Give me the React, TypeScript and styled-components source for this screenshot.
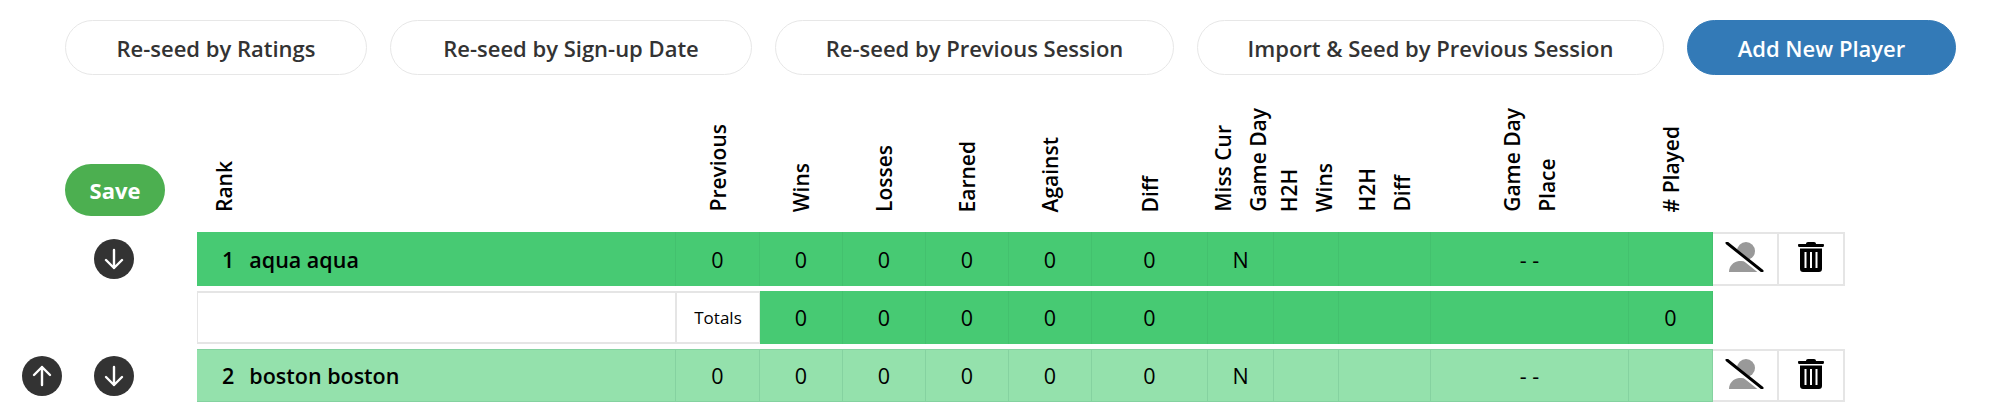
import styled, { createGlobalStyle } from "styled-components";

const COLUMNS = "197px 479px 84px 83px 83px 83px 83px 116px 66px 65px 92px 198px 84px 66px 66px";

const GlobalStyle = createGlobalStyle`
  html, body {
    margin: 0;
    background: #fff;
    overflow: hidden;
  }
  body {
    font-family: "Open Sans", "Noto Sans", "Liberation Sans", sans-serif;
    color: #000;
  }
`;

const Page = styled.div`
  width: 2005px;
  height: 403px;
  overflow: hidden;
`;

const Toolbar = styled.div`
  display: flex;
  gap: 23px;
  padding: 20px 0 0 65px;
`;

const PillButton = styled.button<{ $width: number; $primary?: boolean }>`
  width: ${(p) => p.$width}px;
  height: 55px;
  padding: 0;
  border-radius: 28px;
  border: 1px solid ${(p) => (p.$primary ? "#337ab7" : "#e7e7e7")};
  background: ${(p) => (p.$primary ? "#337ab7" : "#fff")};
  color: ${(p) => (p.$primary ? "#fff" : "#333")};
  font-family: inherit;
  font-size: 22px;
  font-weight: 600;
`;

const Table = styled.div`
  display: flex;
  flex-direction: column;
  gap: 5px;
`;

const HeaderRow = styled.div`
  display: grid;
  grid-template-columns: ${COLUMNS};
  height: 152px;
  align-items: end;
`;

const SaveCell = styled.div`
  padding: 0 0 11px 65px;
`;

const SaveButton = styled.button`
  width: 100px;
  height: 52px;
  padding: 0;
  border: none;
  border-radius: 26px;
  background: #4caf50;
  color: #fff;
  font-family: inherit;
  font-size: 22px;
  font-weight: 700;
`;

const HeaderCell = styled.div<{ $left?: boolean }>`
  display: flex;
  justify-content: ${(p) => (p.$left ? "flex-start" : "center")};
  padding: 0 0 15px ${(p) => (p.$left ? "10px" : "0")};
`;

const HeaderLabel = styled.div`
  writing-mode: vertical-rl;
  transform: rotate(180deg);
  font-size: 21px;
  font-weight: 600;
  line-height: 35px;
  white-space: pre-line;
`;

const Row = styled.div<{ $height: number }>`
  display: grid;
  grid-template-columns: ${COLUMNS};
  height: ${(p) => p.$height}px;
`;

const Handles = styled.div`
  display: flex;
  justify-content: flex-end;
  align-items: center;
  gap: 32px;
  padding-right: 63px;
`;

const ArrowButton = styled.div`
  width: 40px;
  height: 40px;
  border-radius: 50%;
  background: #333;
  display: flex;
  align-items: center;
  justify-content: center;
`;

const Cell = styled.div<{ $tone: "strong" | "light" | "blank" }>`
  display: flex;
  align-items: center;
  justify-content: center;
  font-size: 21.5px;
  box-sizing: border-box;
  background: ${(p) =>
    p.$tone === "strong" ? "#47ca73" : p.$tone === "light" ? "#94e1ac" : "#fff"};
  border-style: solid;
  border-width: ${(p) => (p.$tone === "blank" ? "2px 1px" : "0 1px 0 0")};
  border-color: ${(p) =>
    p.$tone === "strong" ? "#43c16e" : p.$tone === "light" ? "#85d2a0" : "#e5e5e5"};
  ${(p) => (p.$tone === "light" ? "border-top-width: 1px; border-bottom-width: 1px;" : "")}
`;

const NameCell = styled(Cell)`
  justify-content: flex-start;
  padding-left: 25px;
  font-weight: 600;
`;

const RankNumber = styled.span`
  margin-right: 15px;
`;

const TotalsLabel = styled(Cell)`
  font-size: 17px;
`;

const ActionCell = styled(Cell)`
  border-width: 2px 2px 2px 0;
  border-color: #e5e5e5;
  background: #fff;
  padding-bottom: 4px;
`;

const ArrowIcon = ({ up }: { up?: boolean }) => (
  <svg width="26" height="26" viewBox="0 0 26 26" fill="none" stroke="#fff" strokeWidth="2.4" strokeLinecap="round" strokeLinejoin="round">
    {up ? <path d="M13 22V4M5 12l8-8 8 8" /> : <path d="M13 4v18M5 14l8 8 8-8" />}
  </svg>
);

const AbsentIcon = () => (
  <svg width="40" height="30" viewBox="0 0 40 30">
    <circle cx="21" cy="9" r="9" fill="#999" />
    <path d="M4 30c0-6 4-10 10-11 3 0 6 0 9 1l13 10z" fill="#999" />
    <path d="M2 2.500l35 28" stroke="#fff" strokeWidth="5" />
    <path d="M2 1l35 28" stroke="#000" strokeWidth="3" strokeLinecap="round" />
  </svg>
);

const TrashIcon = () => (
  <svg width="26" height="30" viewBox="0 0 26 30">
    <path d="M8 2c0-1.200 .8-2 2-2h6c1.200 0 2 .8 2 2h7c.6 0 1 .5 1 1.300S25.600 5 25 5H1C.4 5 0 4.100 0 3.300S.4 2 1 2z" fill="#000" />
    <path d="M2 6.500h22V27c0 1.800-1.200 3-3 3H5c-1.800 0-3-1.200-3-3z" fill="#000" />
    <path d="M6.500 10h2v16h-2zM12 10h2v16h-2zM17.500 10h2v16h-2z" fill="#fff" />
  </svg>
);

const headers = [
  { label: "Previous" },
  { label: "Wins" },
  { label: "Losses" },
  { label: "Earned" },
  { label: "Against" },
  { label: "Diff" },
  { label: "Miss Cur\nGame Day" },
  { label: "H2H\nWins" },
  { label: "H2H\nDiff" },
  { label: "Game Day\nPlace" },
  { label: "# Played" },
];

const players = [
  { rank: 1, name: "aqua aqua", tone: "strong" as const, height: 54, canMoveUp: false },
  { rank: 2, name: "boston boston", tone: "light" as const, height: 53, canMoveUp: true },
];

const PlayerRow = ({ player }: { player: (typeof players)[number] }) => (
  <Row $height={player.height}>
    <Handles>
      {player.canMoveUp && (
        <ArrowButton>
          <ArrowIcon up />
        </ArrowButton>
      )}
      <ArrowButton>
        <ArrowIcon />
      </ArrowButton>
    </Handles>
    <NameCell $tone={player.tone}>
      <RankNumber>{player.rank}</RankNumber>
      {player.name}
    </NameCell>
    {["0", "0", "0", "0", "0", "0", "N", "", "", "- -", ""].map((value, i) => (
      <Cell key={i} $tone={player.tone}>
        {value}
      </Cell>
    ))}
    <ActionCell $tone="blank">
      <AbsentIcon />
    </ActionCell>
    <ActionCell $tone="blank">
      <TrashIcon />
    </ActionCell>
  </Row>
);

export default function App() {
  return (
    <Page>
      <GlobalStyle />
      <Toolbar>
        <PillButton $width={302}>Re-seed by Ratings</PillButton>
        <PillButton $width={362}>Re-seed by Sign-up Date</PillButton>
        <PillButton $width={399}>Re-seed by Previous Session</PillButton>
        <PillButton $width={467}>Import &amp; Seed by Previous Session</PillButton>
        <PillButton $width={269} $primary>
          Add New Player
        </PillButton>
      </Toolbar>
      <Table>
        <HeaderRow>
          <SaveCell>
            <SaveButton>Save</SaveButton>
          </SaveCell>
          <HeaderCell $left>
            <HeaderLabel>Rank</HeaderLabel>
          </HeaderCell>
          {headers.map((h) => (
            <HeaderCell key={h.label}>
              <HeaderLabel>{h.label}</HeaderLabel>
            </HeaderCell>
          ))}
        </HeaderRow>
        <PlayerRow player={players[0]} />
        <Row $height={53}>
          <div />
          <Cell $tone="blank" />
          <TotalsLabel $tone="blank">Totals</TotalsLabel>
          {["0", "0", "0", "0", "0", "", "", "", "", "0"].map((value, i) => (
            <Cell key={i} $tone="strong">
              {value}
            </Cell>
          ))}
        </Row>
        <PlayerRow player={players[1]} />
      </Table>
    </Page>
  );
}
